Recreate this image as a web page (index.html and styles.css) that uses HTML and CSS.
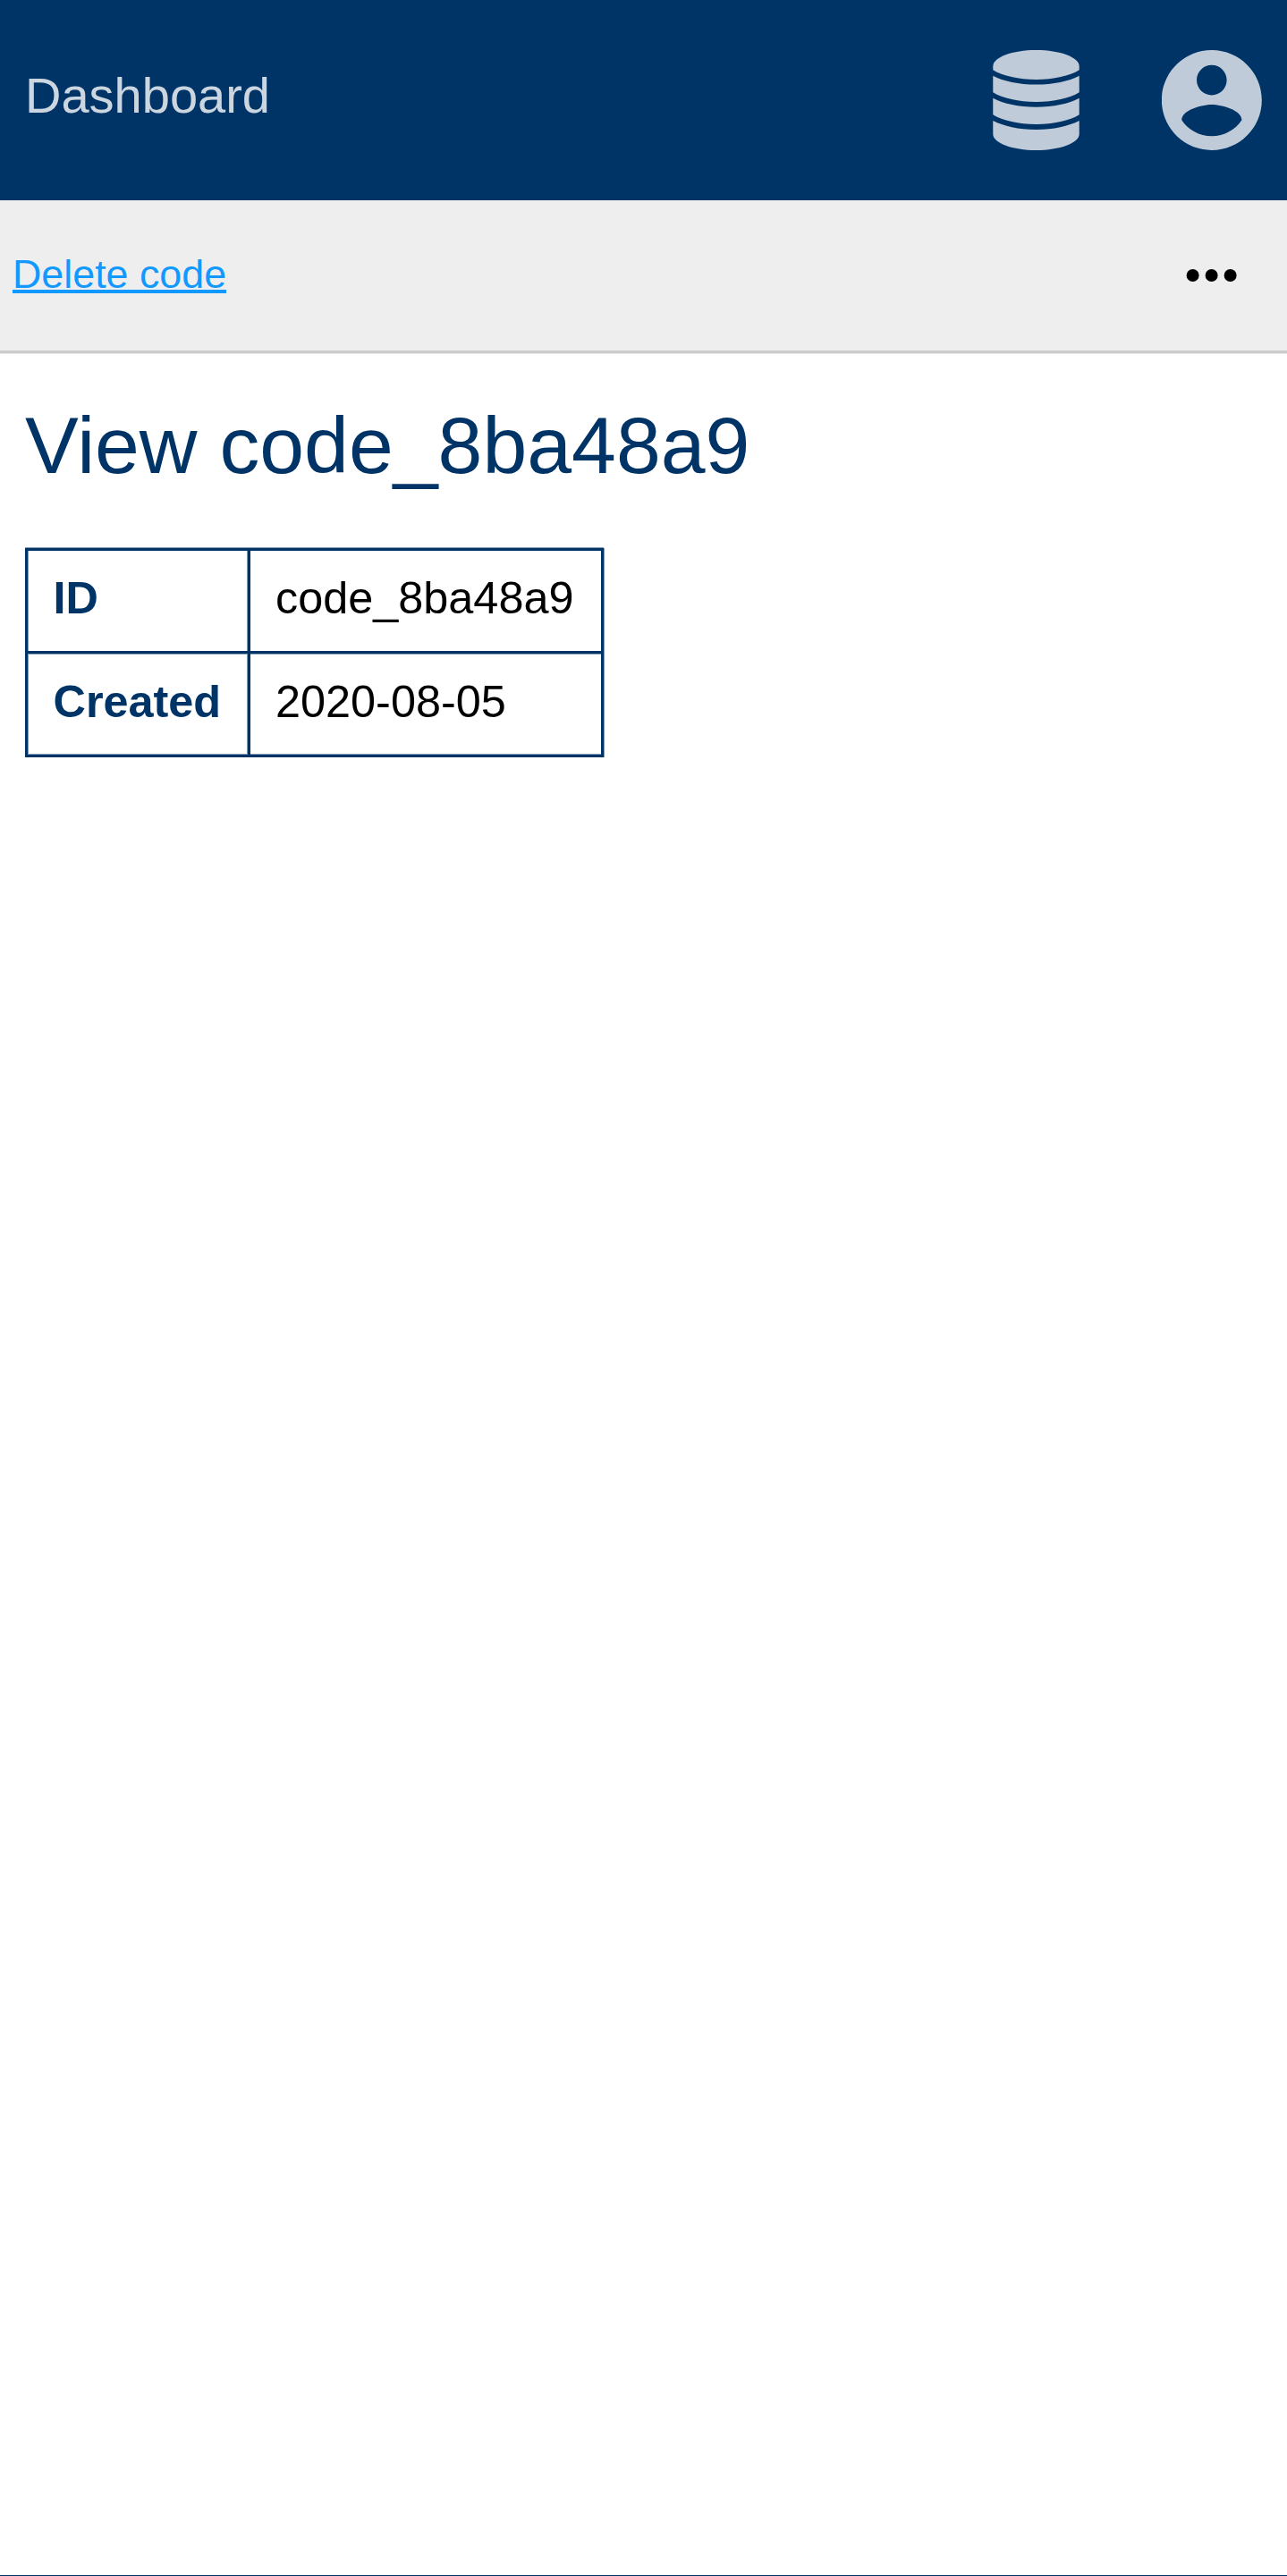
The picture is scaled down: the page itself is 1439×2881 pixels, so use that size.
FILE: index.html
```html
<!DOCTYPE html>
<html lang="en">
<head>
<meta charset="utf-8">
<title>View code_8ba48a9</title>
<link rel="stylesheet" href="styles.css">
</head>
<body>
<header class="header">
  <a class="brand">Dashboard</a>
  <nav class="nav">
    <svg class="icon-db" viewBox="0 0 97 112" aria-hidden="true">
      <path d="M.3 18C.3 8 22 0 48.500 0S96.700 8 96.700 18V22.300C86 29 68 33 48.500 33S11 29 .3 22.300Z"/>
      <path d="M.3 28.700C12 35 29 38.500 48.500 38.500S85 35 96.700 28.700V47.300C86 54 68 58 48.500 58S11 54 .3 47.300Z"/>
      <path d="M.3 53.700C12 60 29 63.700 48.500 63.700S85 60 96.700 53.700V72.300C86 79 68 83 48.500 83S11 79 .3 72.300Z"/>
      <path d="M.3 79C12 85 29 89 48.500 89S85 85 96.700 79V94C96.700 104 75 112 48.500 112S.3 104 .3 94Z"/>
    </svg>
    <svg class="icon-user" viewBox="2 2 20 20" aria-hidden="true">
      <path d="M12 2C6.480 2 2 6.480 2 12s4.480 10 10 10 10-4.480 10-10S17.520 2 12 2zm0 3c1.660 0 3 1.340 3 3s-1.340 3-3 3-3-1.340-3-3 1.340-3 3-3zm0 14.200c-2.500 0-4.710-1.280-6-3.220.03-1.990 4-3.080 6-3.080 1.990 0 5.970 1.090 6 3.080-1.290 1.940-3.500 3.220-6 3.220z"/>
    </svg>
  </nav>
</header>
<div class="toolbar">
  <a class="action" href="#">Delete code</a>
  <svg class="icon-more" viewBox="0 0 24 24" aria-hidden="true">
    <circle cx="5.900" cy="12" r="2"/><circle cx="11.900" cy="12" r="2"/><circle cx="17.900" cy="12" r="2"/>
  </svg>
</div>
<main class="main">
  <h1 class="title">View code_8ba48a9</h1>
  <dl class="details">
    <dt>ID</dt><dd>code_8ba48a9</dd>
    <dt>Created</dt><dd>2020-08-05</dd>
  </dl>
</main>
<footer class="footer"></footer>
</body>
</html>
```
FILE: styles.css
```css
* { box-sizing: border-box; }

body {
  display: flex;
  flex-direction: column;
  height: 2881px;
  margin: 0;
  background: #fff;
  color: #000;
  font: 56px "Liberation Sans", Arial, sans-serif;
}

.header {
  display: flex;
  justify-content: space-between;
  height: 224px;
  padding: 0 28px;
  background: #036;
}

.brand {
  color: rgba(255, 255, 255, .8);
  line-height: 213px;
}

.nav {
  display: flex;
  align-items: center;
  gap: 92px;
  fill: rgba(255, 255, 255, .75);
}

.icon-db { width: 97px; height: 112px; }
.icon-user { width: 112px; height: 112px; }
.icon-user path { transform: translateX(-.03px); }

.toolbar {
  display: flex;
  justify-content: space-between;
  height: 172px;
  padding: 0 42.5px 0 14px;
  border-bottom: 1px solid #e5e5e5;
  background: #eee;
  box-shadow: inset 0 -3px #ccc;
}

.action {
  color: #19f;
  font-size: 44.8px;
  line-height: 165px;
  text-decoration-thickness: 4px;
}

.icon-more {
  width: 84px;
  height: 84px;
  margin-top: 42px;
}

.main {
  flex: 1;
  padding: 52px 28px 0;
}

.title {
  margin: 0;
  color: #036;
  font-size: 89.6px;
  font-weight: 400;
  line-height: 100px;
}

.details {
  display: grid;
  grid-template-columns: 246px 392px;
  grid-template-rows: 112px 113px;
  gap: 3px;
  width: 647px;
  margin: 65px 0 0;
  border: 3px solid #036;
  background: #036;
  box-shadow: 0 -1px #7f99b2, 1px 0 #7f99b2;
  font-size: 50.4px;
  line-height: 105px;
}

.details dt,
.details dd {
  margin: 0;
  padding-left: 28px;
  background: #fff;
}

.details dt {
  padding-left: 28.5px;
  color: #036;
  font-weight: 700;
  box-shadow: inset 1px 0 #7f99b2, inset -1px 0 #7f99b2;
}

.details dt:nth-of-type(2),
.details dd:nth-of-type(2) {
  padding-top: 1px;
}

.details dt:nth-of-type(2) {
  box-shadow: inset 1px 0 #7f99b2, inset -1px 0 #7f99b2, inset 0 1px #7f99b2, inset 0 -1px #7f99b2;
}

.details dd:nth-of-type(2) {
  box-shadow: inset 0 1px #7f99b2, inset 0 -1px #7f99b2;
}

.footer {
  height: 1px;
  background: #036;
}
```
